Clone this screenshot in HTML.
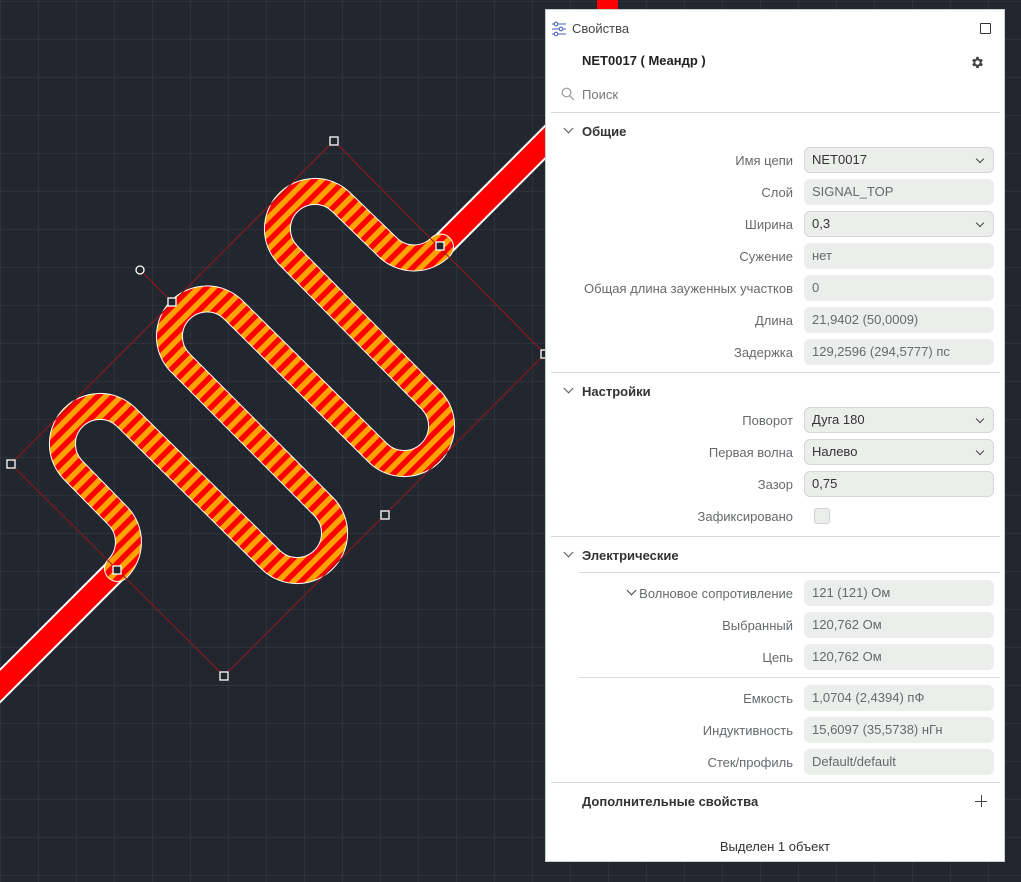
<!DOCTYPE html>
<html><head><meta charset="utf-8"><style>
*{margin:0;padding:0;box-sizing:border-box}
body{width:1021px;height:882px;overflow:hidden;background:#22272f;font-family:"Liberation Sans","DejaVu Sans",sans-serif;position:relative}
#cv{position:absolute;left:0;top:0}
#p{position:absolute;left:545px;top:9px;width:460px;height:853px;background:#fff;border:1px solid #c9d0d0}
.a{position:absolute;white-space:nowrap;font-size:13px}
.l{position:absolute;right:211px;font-size:13px;color:#666a6d;white-space:nowrap;text-align:right}
.f{position:absolute;left:258px;width:190px;height:26px;background:#eceeec;border-radius:6px;font-size:13px;color:#666a6d;padding-left:8px;line-height:26px}
.b{border:1px solid #d3d8d6;color:#333;line-height:24px;padding-left:7px}
.d:after{content:"";position:absolute;right:10px;top:8px;width:5px;height:5px;border-right:1.3px solid #444;border-bottom:1.3px solid #444;transform:rotate(45deg)}
.s{position:absolute;height:1px;background:#d4dbdb}
.h{position:absolute;left:36px;font-size:13px;font-weight:bold;color:#333}
.c{position:absolute;width:7px;height:7px;border-right:1.3px solid #555;border-bottom:1.3px solid #555;transform:rotate(45deg)}
</style></head><body>
<svg id="cv" width="1021" height="882" xmlns="http://www.w3.org/2000/svg">
<defs>
<pattern id="g" width="38" height="38" patternUnits="userSpaceOnUse" x="0" y="1"><path d="M0 0H38M0 0V38" stroke="#363c46" stroke-width="1" fill="none"/></pattern>
<pattern id="st" width="11" height="11" patternUnits="userSpaceOnUse" patternTransform="rotate(45)"><rect width="11" height="11" fill="#ff0000"/><rect width="5.5" height="11" fill="#ffa200"/></pattern>
</defs>
<rect width="1021" height="882" fill="url(#g)"/>
<g stroke-linecap="round" fill="none">
<path d="M117.5 568.5L-40 726M440.5 247L640 47" stroke="#fff" stroke-width="25"/>
<path d="M117.5 568.5L-40 726M440.5 247L640 47" stroke="#ff0000" stroke-width="21"/>
</g>
<rect x="597" y="0" width="21" height="12" fill="#ff0000"/>
<path d="M117.5 568.5A37.5 37.5 0 0 0 117.5 515.5L72.5 469.5A37.5 37.5 0 0 1 125.5 416.5L271.5 560.5A37.5 37.5 0 0 0 324.5 507.5L179.5 362A37.5 37.5 0 0 1 232.5 309L378.5 453.5A37.5 37.5 0 0 0 431.5 400.5L287.5 254.5A37.5 37.5 0 0 1 340.5 201.5L387.5 247A37.5 37.5 0 0 0 440.5 247" fill="none" stroke="#fff" stroke-width="27" stroke-linecap="round"/>
<path d="M117.5 568.5A37.5 37.5 0 0 0 117.5 515.5L72.5 469.5A37.5 37.5 0 0 1 125.5 416.5L271.5 560.5A37.5 37.5 0 0 0 324.5 507.5L179.5 362A37.5 37.5 0 0 1 232.5 309L378.5 453.5A37.5 37.5 0 0 0 431.5 400.5L287.5 254.5A37.5 37.5 0 0 1 340.5 201.5L387.5 247A37.5 37.5 0 0 0 440.5 247" fill="none" stroke="url(#st)" stroke-width="25" stroke-linecap="round"/>
<g stroke="#9a1515" stroke-width="1" fill="none">
<path d="M334 141L545 354L224 676L11 464Z"/>
<path d="M140 270L172 302"/>
</g>
<g fill="#22272f" stroke="#fff" stroke-width="1.3">
<rect x="330" y="137" width="8" height="8"/><rect x="541" y="350" width="8" height="8"/>
<rect x="220" y="672" width="8" height="8"/><rect x="7" y="460" width="8" height="8"/>
<rect x="168" y="298" width="8" height="8"/><rect x="381" y="511" width="8" height="8"/>
<rect x="113" y="566" width="8" height="8"/><rect x="436" y="242" width="8" height="8"/>
<circle cx="140" cy="270" r="4"/>
</g>
</svg>
<div id="p">
<svg style="position:absolute;left:5px;top:11px" width="16" height="16" viewBox="0 0 16 16" fill="none" stroke="#4a62b8" stroke-width="1.1"><path d="M1 3H15M1 8H15M1 13H15"/><circle cx="5" cy="3" r="1.8" fill="#fff"/><circle cx="10" cy="8" r="1.8" fill="#fff"/><circle cx="5" cy="13" r="1.8" fill="#fff"/></svg>
<div class="a" style="left:26px;top:11px;color:#444">Свойства</div>
<div style="position:absolute;left:434px;top:13px;width:11px;height:11px;border:1.3px solid #333;border-radius:1px"></div>
<div class="a" style="left:36px;top:43px;font-weight:bold;color:#222">NET0017 ( Меандр )</div>
<svg style="position:absolute;left:424px;top:45px" width="15" height="15" viewBox="0 0 24 24"><path fill="#444" d="M19.4 13a7.5 7.5 0 0 0 0-2l2.1-1.6-2-3.5-2.5 1a7.3 7.3 0 0 0-1.7-1L15 3h-4l-.4 2.9a7.3 7.3 0 0 0-1.7 1l-2.5-1-2 3.5L6.6 11a7.5 7.5 0 0 0 0 2l-2.1 1.6 2 3.5 2.5-1a7.3 7.3 0 0 0 1.7 1L11 21h4l.4-2.9a7.3 7.3 0 0 0 1.7-1l2.5 1 2-3.5zM13 15.5a3.5 3.5 0 1 1 0-7 3.5 3.5 0 0 1 0 7z" transform="translate(-1 0)"/></svg>
<svg style="position:absolute;left:15px;top:77px" width="14" height="14" viewBox="0 0 14 14" fill="none" stroke="#999" stroke-width="1.2"><circle cx="5.5" cy="5.5" r="4.3"/><path d="M8.7 8.7L13 13"/></svg>
<div class="a" style="left:36px;top:77px;color:#777">Поиск</div>
<div class="s" style="left:5px;width:449px;top:102px"></div>
<div class="c" style="left:19px;top:115px"></div><div class="h" style="top:114px">Общие</div>
<div class="l" style="top:143px">Имя цепи</div><div class="f b d" style="top:137px">NET0017</div>
<div class="l" style="top:175px">Слой</div><div class="f" style="top:169px">SIGNAL_TOP</div>
<div class="l" style="top:207px">Ширина</div><div class="f b d" style="top:201px">0,3</div>
<div class="l" style="top:239px">Сужение</div><div class="f" style="top:233px">нет</div>
<div class="l" style="top:271px">Общая длина зауженных участков</div><div class="f" style="top:265px">0</div>
<div class="l" style="top:303px">Длина</div><div class="f" style="top:297px">21,9402 (50,0009)</div>
<div class="l" style="top:335px">Задержка</div><div class="f" style="top:329px">129,2596 (294,5777) пс</div>
<div class="s" style="left:5px;width:449px;top:362px"></div>
<div class="c" style="left:19px;top:375px"></div><div class="h" style="top:374px">Настройки</div>
<div class="l" style="top:403px">Поворот</div><div class="f b d" style="top:397px">Дуга 180</div>
<div class="l" style="top:435px">Первая волна</div><div class="f b d" style="top:429px">Налево</div>
<div class="l" style="top:467px">Зазор</div><div class="f b" style="top:461px">0,75</div>
<div class="l" style="top:499px">Зафиксировано</div><div style="position:absolute;left:268px;top:498px;width:16px;height:16px;background:#eceeec;border:1px solid #cfd4d2;border-radius:3px"></div>
<div class="s" style="left:5px;width:449px;top:526px"></div>
<div class="c" style="left:19px;top:539px"></div><div class="h" style="top:538px">Электрические</div>
<div class="s" style="left:33px;width:421px;top:562px"></div>
<div class="c" style="left:82px;top:577px;border-color:#444"></div>
<div class="l" style="top:576px">Волновое сопротивление</div><div class="f" style="top:570px">121 (121) Ом</div>
<div class="l" style="top:608px">Выбранный</div><div class="f" style="top:602px">120,762 Ом</div>
<div class="l" style="top:640px">Цепь</div><div class="f" style="top:634px">120,762 Ом</div>
<div class="s" style="left:33px;width:421px;top:667px"></div>
<div class="l" style="top:681px">Емкость</div><div class="f" style="top:675px">1,0704 (2,4394) пФ</div>
<div class="l" style="top:713px">Индуктивность</div><div class="f" style="top:707px">15,6097 (35,5738) нГн</div>
<div class="l" style="top:745px">Стек/профиль</div><div class="f" style="top:739px">Default/default</div>
<div class="s" style="left:5px;width:449px;top:772px"></div>
<div class="h" style="top:784px">Дополнительные свойства</div>
<div style="position:absolute;left:429px;top:791px;width:12px;height:1.3px;background:#444"></div>
<div style="position:absolute;left:434.5px;top:785px;width:1.3px;height:12px;background:#444"></div>
<div class="a" style="left:0;width:458px;text-align:center;top:829px;color:#333">Выделен 1 объект</div>
</div>
</body></html>
